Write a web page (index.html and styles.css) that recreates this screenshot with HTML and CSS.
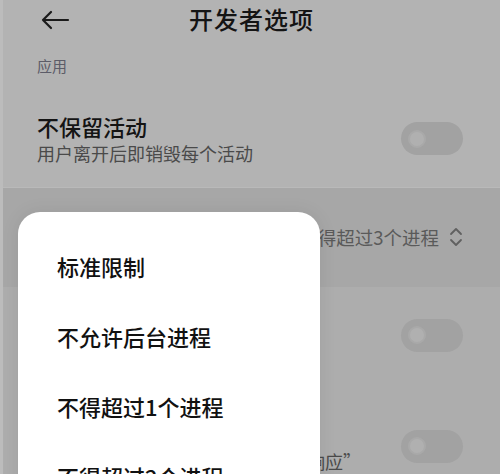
FILE: index.html
```html
<!DOCTYPE html>
<html lang="zh-CN">
<head>
<meta charset="utf-8">
<link rel="stylesheet" href="styles.css">
</head>
<body>
<div class="screen">
  <header class="topbar">
    <div class="back">
      <svg width="30" height="20" viewBox="0 0 30 20"><path d="M28 10H3M11 2L3 10L11 18" fill="none" stroke="#1a1a1a" stroke-width="2.2" stroke-linecap="round" stroke-linejoin="round"/></svg>
    </div>
    <h1 class="title">开发者选项</h1>
    <div></div>
  </header>
  <div class="section">应用</div>
  <div class="row row-first">
    <div class="texts">
      <div class="row-title">不保留活动</div>
      <div class="row-sub">用户离开后即销毁每个活动</div>
    </div>
    <div class="toggle"><span class="knob"></span></div>
  </div>
  <div class="row band">
    <div class="row-title">后台进程限制</div>
    <div class="value">不得超过3个进程
      <svg width="14" height="20" viewBox="0 0 14 20"><path d="M2 7L7 2L12 7M2 13L7 18L12 13" fill="none" stroke="#606060" stroke-width="1.8" stroke-linecap="round" stroke-linejoin="round"/></svg>
    </div>
  </div>
  <div class="row row-third">
    <div class="texts">
      <div class="row-title">显示所有“应用无响应”</div>
    </div>
    <div class="toggle"><span class="knob"></span></div>
  </div>
  <div class="row row-fourth">
    <div class="texts">
      <div class="row-title">显示后台应用无响应</div>
      <div class="row-sub">为在后台运行的应用显示“应用无响应”</div>
    </div>
    <div class="toggle"><span class="knob"></span></div>
  </div>

  <div class="popup">
    <div class="item">标准限制</div>
    <div class="item">不允许后台进程</div>
    <div class="item">不得超过1个进程</div>
    <div class="item">不得超过2个进程</div>
  </div>
</div>
</body>
</html>
```

FILE: styles.css
```css
* { box-sizing: border-box; margin: 0; padding: 0; }
html, body { width: 500px; height: 474px; overflow: hidden; }
body {
  font-family: "Noto Sans CJK SC", "Noto Sans", sans-serif;
  background: #b3b3b3;
  color: #161616;
}
.screen {
  position: relative;
  width: 500px;
  height: 474px;
  overflow: hidden;
  background: linear-gradient(#b3b3b3 0, #b3b3b3 287px, #adadad 287px);
  border-left: 3px solid #bcbcbc;
}
.topbar {
  display: grid;
  grid-template-columns: 1fr auto 1fr;
  align-items: center;
  height: 38px;
}
.back { padding-left: 37px; display: flex; align-items: center; padding-top: 2px; }
.title {
  font-size: 24px;
  font-weight: 500;
  line-height: 36px;
  color: #141414;
  letter-spacing: 1px;
}
.section {
  margin-top: 18px;
  padding-left: 34px;
  font-size: 15px;
  line-height: 20px;
  color: #5c5c68;
}
.row {
  display: flex;
  align-items: center;
  justify-content: space-between;
  padding: 0 37px 0 34px;
}
.row-first { margin-top: 14px; height: 97px; }
.texts { display: flex; flex-direction: column; }
.row-title { font-size: 22px; line-height: 29px; font-weight: 500; color: #141414; }
.row-sub { font-size: 18px; line-height: 24px; color: #4a4a4a; white-space: nowrap; }
.band {
  height: 100px;
  background: #a7a7a7;
  border-top: 1px solid #b9b9b9;
  padding-bottom: 2px;
}
.value {
  display: flex;
  align-items: center;
  gap: 10px;
  font-size: 18.5px;
  color: #5a5a5a;
}
.row-third { height: 96px; }
.row-fourth { height: 126px; }
.row-fourth .row-sub { margin-top: 0; }
.toggle {
  width: 62px;
  height: 33px;
  border-radius: 17px;
  background: #a2a2a2;
  display: flex;
  align-items: center;
  padding-left: 7px;
  flex-shrink: 0;
}
.knob {
  width: 18px;
  height: 18px;
  border-radius: 50%;
  background: #b0b0b0;
  border: 2px solid #a9a9a9;
}
.popup {
  position: absolute;
  left: 15px;
  top: 212px;
  width: 302px;
  height: 320px;
  background: #ffffff;
  border-radius: 22px;
  padding-top: 19px;
  box-shadow: 0 0 18px rgba(0,0,0,0.08);
}
.item {
  height: 70px;
  line-height: 70px;
  padding-left: 39px;
  font-size: 22px;
  font-weight: 500;
  color: #111;
}
```
